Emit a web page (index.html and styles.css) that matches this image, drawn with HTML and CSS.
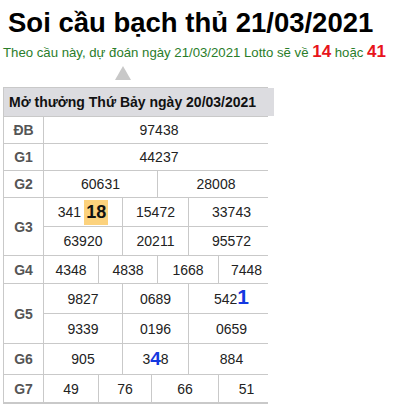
FILE: index.html
```html
<!DOCTYPE html>
<html lang="vi">
<head>
<meta charset="utf-8">
<link rel="stylesheet" href="styles.css">
</head>
<body>
<h1 class="title">Soi cầu bạch thủ 21/03/2021</h1>
<p class="lead">Theo cầu này, dự đoán ngày 21/03/2021 Lotto sẽ về <b class="hot">14</b> hoặc <b class="hot">41</b></p>
<div class="arrow-row"><span class="arrow"></span></div>
<div class="kq">
  <div class="head">Mở thưởng Thứ Bảy ngày 20/03/2021</div>

  <div class="lbl r1">ĐB</div>
  <div class="c full">97438</div>

  <div class="lbl">G1</div>
  <div class="c full">44237</div>

  <div class="lbl">G2</div>
  <div class="c half-a">60631</div>
  <div class="c half-b">28008</div>

  <div class="lbl tall">G3</div>
  <div class="c t1">341<span class="mark">18</span></div>
  <div class="c t2">15472</div>
  <div class="c t3">33743</div>
  <div class="c t1">63920</div>
  <div class="c t2">20211</div>
  <div class="c t3">95572</div>

  <div class="lbl">G4</div>
  <div class="c q1">4348</div>
  <div class="c q2">4838</div>
  <div class="c q3">1668</div>
  <div class="c q4">7448</div>

  <div class="lbl tall">G5</div>
  <div class="c t1 tt">9827</div>
  <div class="c t2 tt">0689</div>
  <div class="c t3 tt">542<b class="blue big">1</b></div>
  <div class="c t1 tt">9339</div>
  <div class="c t2 tt">0196</div>
  <div class="c t3 tt">0659</div>

  <div class="lbl">G6</div>
  <div class="c t1 g6">905</div>
  <div class="c t2 g6">3<b class="blue mid">4</b>8</div>
  <div class="c t3 g6">884</div>

  <div class="lbl">G7</div>
  <div class="c s1">49</div>
  <div class="c s2">76</div>
  <div class="c s3">66</div>
  <div class="c s4">51</div>
</div>
</body>
</html>
```
FILE: styles.css
```css
body {
  margin: 0;
  font-family: "Liberation Sans", Arial, sans-serif;
  background: #fff;
}
.title {
  margin: 0;
  padding: 6px 0 0 8px;
  font-size: 27.5px;
  line-height: 34px;
  font-weight: bold;
  color: #000;
  white-space: nowrap;
}
.lead {
  margin: 2px 0 0 3px;
  font-size: 13.2px;
  line-height: 20px;
  color: #2a7d2a;
  white-space: nowrap;
}
.hot {
  color: #e8141b;
  font-size: 17px;
}
.arrow-row {
  padding: 3px 0 0 115px;
  height: 21px;
}
.arrow {
  display: block;
  width: 0;
  height: 0;
  border-left: 8px solid transparent;
  border-right: 8px solid transparent;
  border-bottom: 14px solid #c8c8c8;
}
.kq {
  margin-left: 3px;
  width: 265px;
  display: grid;
  grid-template-columns: 39px 54px 23px 28px 5px 30px 29px 55px;
  gap: 1px;
  background: #c9c9c9;
  border: 1px solid #c9c9c9;
  border-bottom-width: 2px;
  box-sizing: border-box;
  font-size: 14px;
  color: #222;
}
.head {
  grid-column: 1 / -1;
  background: #dcdce0;
  font-weight: bold;
  color: #111;
  font-size: 14px;
  height: 28px;
  display: flex;
  align-items: center;
  padding-left: 5px;
}
.lbl {
  background: #fff;
  font-weight: bold;
  color: #555;
  display: flex;
  align-items: center;
  justify-content: center;
  height: auto;
  grid-column: 1;
}
.lbl.tall {
  grid-row: span 2;
}
.c {
  background: #fff;
  display: flex;
  align-items: center;
  justify-content: center;
  height: 26px;
}
.full { grid-column: 2 / -1; }
.half-a { grid-column: 2 / 6; }
.half-b { grid-column: 6 / -1; }
.t1 { grid-column: 2 / 4; height: 28px; }
.t2 { grid-column: 4 / 7; height: 28px; }
.t3 { grid-column: 7 / -1; height: 28px; }
.tt { height: 29px; }
.g6 { height: 30px; }
.q1 { grid-column: 2; height: 27px; }
.q2 { grid-column: 3 / 6; height: 27px; }
.q3 { grid-column: 6 / 8; height: 27px; }
.q4 { grid-column: 8; height: 27px; }
.s1 { grid-column: 2; height: 27px; }
.s2 { grid-column: 3 / 5; height: 27px; }
.s3 { grid-column: 5 / 8; height: 27px; }
.s4 { grid-column: 8; height: 27px; }
.mark {
  background: #fcd27d;
  font-weight: bold;
  font-size: 18px;
  color: #111;
  padding: 2px 2px;
  margin-left: 3px;
}
.blue { color: #1438e0; }
.big { font-size: 21px; line-height: 20px; position: relative; top: -2px; }
.mid { font-size: 19px; line-height: 20px; }
```
